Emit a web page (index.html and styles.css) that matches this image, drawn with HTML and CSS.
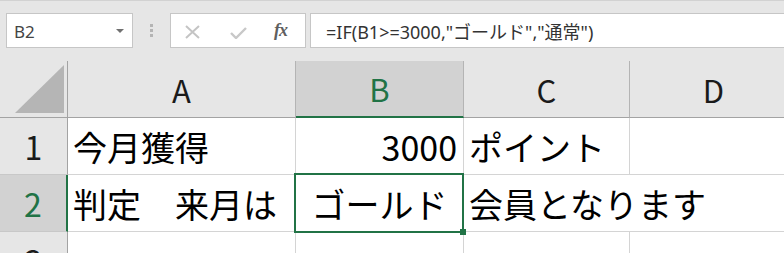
FILE: index.html
```html
<!DOCTYPE html>
<html lang="ja">
<head>
<meta charset="utf-8">
<title>Excel</title>
<link rel="stylesheet" href="styles.css">
</head>
<body>
<div class="toolbar">
  <div class="namebox"><span class="ref">B2</span><span class="caret"></span></div>
  <div class="grip"><i></i><i></i><i></i></div>
  <div class="fxbox">
    <svg class="ico-x" width="15" height="14" viewBox="0 0 15 14"><path d="M1 1 L14 13 M14 1 L1 13" stroke="#c4c4c4" stroke-width="2" fill="none"/></svg>
    <svg class="ico-check" width="17" height="12" viewBox="0 0 17 12"><path d="M1 6 L6 11 L16 1" stroke="#c8c8c8" stroke-width="2.4" fill="none"/></svg>
    <span class="fx">fx</span>
  </div>
  <div class="formula">=IF(B1&gt;=3000,"ゴールド","通常")</div>
</div>
<div class="sheet">
  <div class="corner"><svg width="67" height="56" viewBox="0 0 67 56"><polygon points="64,4 64,52 15,52" fill="#b5b5b5"/></svg></div>
  <div class="colhead">A</div>
  <div class="colhead sel">B</div>
  <div class="colhead">C</div>
  <div class="colhead">D</div>

  <div class="rowhead">1</div>
  <div class="cell">今月獲得</div>
  <div class="cell num">3000</div>
  <div class="cell">ポイント</div>
  <div class="cell"></div>

  <div class="rowhead sel">2</div>
  <div class="cell">判定　来月は</div>
  <div class="cell center">ゴールド</div>
  <div class="cell span2">会員となります</div>

  <div class="rowhead">3</div>
  <div class="cell"></div>
  <div class="cell"></div>
  <div class="cell"></div>
  <div class="cell"></div>

  <div class="selection"><span class="handle"></span></div>
</div>
</body>
</html>
```
FILE: styles.css
```css
html, body {
  margin: 0;
  padding: 0;
  background: #ffffff;
  overflow: hidden;
  width: 784px;
  height: 253px;
}

.toolbar {
  box-sizing: border-box;
  height: 61px;
  background: #e6e6e6;
  border-top: 1px solid #d2d2d2;
  padding-top: 12px;
  display: flex;
  align-items: flex-start;
  font-family: "Noto Sans", "Noto Sans CJK JP", sans-serif;
  color: #333;
  overflow: hidden;
}

.toolbar > * {
  flex-shrink: 0;
}

.namebox {
  box-sizing: border-box;
  margin-left: 6px;
  width: 127px;
  height: 35px;
  background: #fff;
  border: 1px solid #c6c6c6;
  display: flex;
  align-items: center;
  justify-content: space-between;
  padding: 0 8px 0 7px;
}

.ref {
  font-size: 17px;
  color: #444;
  line-height: 1;
  padding-top: 2px;
}

.caret {
  width: 0;
  height: 0;
  border-left: 4px solid transparent;
  border-right: 4px solid transparent;
  border-top: 4px solid #707070;
  margin-top: 1px;
}

.grip {
  width: 37px;
  height: 35px;
  display: flex;
  flex-direction: column;
  align-items: center;
  justify-content: center;
  gap: 2px;
}

.grip i {
  display: block;
  width: 3px;
  height: 3px;
  background: #b4b4b4;
}

.fxbox {
  box-sizing: border-box;
  width: 136px;
  height: 35px;
  background: #fff;
  border: 1px solid #c6c6c6;
  display: flex;
  align-items: center;
  padding-left: 14px;
}

.ico-x { display: block; margin-top: 2px; }
.ico-check { display: block; margin-left: 30px; margin-top: 5px; }

.fx {
  margin-left: 27px;
  font-family: "Liberation Serif", serif;
  font-style: italic;
  font-weight: bold;
  font-size: 18px;
  color: #5f5f5f;
  letter-spacing: -1px;
}

.formula {
  box-sizing: border-box;
  margin-left: 4px;
  width: 474px;
  height: 35px;
  background: #fff;
  border: 1px solid #c6c6c6;
  border-right: none;
  padding-left: 15px;
  display: flex;
  align-items: center;
  font-size: 18px;
  color: #333;
  white-space: nowrap;
}

.sheet {
  position: relative;
  display: grid;
  grid-template-columns: 68px 228px 168px 166px 168px;
  grid-template-rows: 57px 57px 57px 57px;
  width: 784px;
  height: 192px;
  overflow: hidden;
  font-family: "Noto Sans CJK JP", sans-serif;
}

.corner,
.colhead,
.rowhead,
.cell {
  box-sizing: border-box;
}

.corner {
  background: #e6e6e6;
  border-right: 1px solid #a3a3a3;
  border-bottom: 1px solid #a3a3a3;
}

.corner svg { display: block; }

.colhead {
  background: #e6e6e6;
  border-right: 1px solid #b4b4b4;
  border-bottom: 1px solid #a3a3a3;
  display: flex;
  align-items: center;
  justify-content: center;
  font-size: 31px;
  color: #1a1a1a;
}

.colhead.sel {
  background: #d2d2d2;
  color: #217346;
  border-bottom: 2px solid #217346;
}

.rowhead {
  background: #e6e6e6;
  border-right: 1px solid #a3a3a3;
  border-bottom: 1px solid #c8c8c8;
  display: flex;
  align-items: center;
  justify-content: center;
  font-size: 32px;
  color: #1a1a1a;
}

.rowhead.sel {
  background: #d2d2d2;
  color: #217346;
  border-right: 2px solid #217346;
}

.cell {
  border-right: 1px solid #d4d4d4;
  border-bottom: 1px solid #d4d4d4;
  display: flex;
  align-items: center;
  padding: 0 5px 0 5px;
  font-size: 34px;
  color: #000;
  white-space: nowrap;
}

.cell.num { justify-content: flex-end; padding-right: 6px; }
.cell.center { justify-content: center; }
.cell.span2 { grid-column: span 2; padding-left: 5px; }

.selection {
  position: absolute;
  left: 294px;
  top: 112px;
  width: 170px;
  height: 60px;
  box-sizing: border-box;
  border: 2px solid #217346;
}

.handle {
  position: absolute;
  right: -4px;
  bottom: -4px;
  width: 6px;
  height: 6px;
  background: #217346;
}
```
